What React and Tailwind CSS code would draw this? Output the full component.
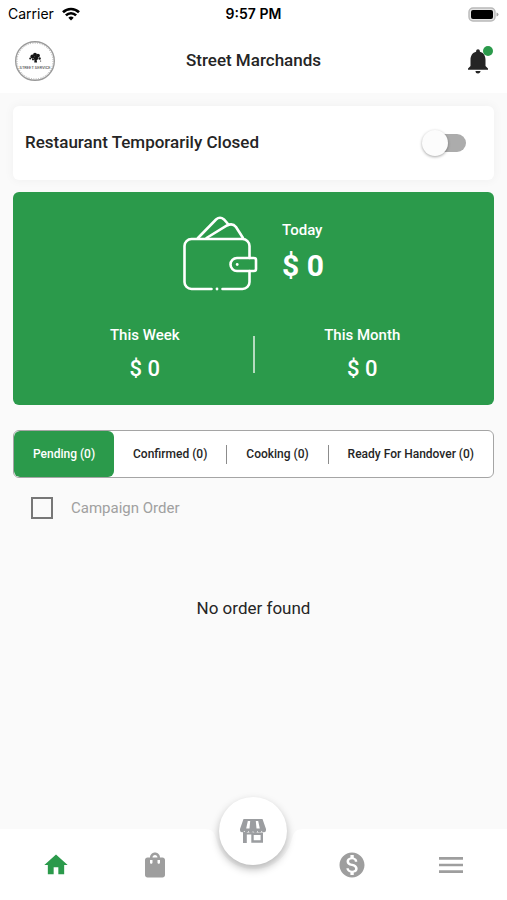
import React, { useState } from 'react'
import { MdHome, MdMenu, MdMonetizationOn, MdNotifications, MdShoppingBag } from 'react-icons/md'

const tabs = [
  { id: 'pending', label: 'Pending', count: 0 },
  { id: 'confirmed', label: 'Confirmed', count: 0 },
  { id: 'cooking', label: 'Cooking', count: 0 },
  { id: 'handover', label: 'Ready For Handover', count: 0 }
]

export default function App() {
  return (
    <div className="flex min-h-screen flex-col bg-[#fafafa] font-[Roboto,sans-serif] text-[#252525]">
      <header className="bg-white">
        <StatusBar />
        <div className="grid h-[65px] grid-cols-[1fr_auto_1fr] items-center px-[14px]">
          <Logo />
          <h1 className="text-[17px] font-medium">Street Marchands</h1>
          <button type="button" aria-label="Notifications" className="relative justify-self-end">
            <MdNotifications className="size-[30px]" />
            <span className="absolute top-0 right-0 size-[10px] rounded-full bg-[#2b9a4b]" />
          </button>
        </div>
      </header>

      <main className="flex-1 px-[13px] pt-[13px]">
        <RestaurantSwitch />
        <Earnings />
        <Orders />
      </main>

      <BottomNav />
    </div>
  )
}

function StatusBar() {
  return (
    <div className="grid h-7 grid-cols-3 items-center px-2 font-[Inter,sans-serif] text-sm text-black">
      <div className="flex items-center gap-2">
        <span>Carrier</span>
        <svg viewBox="0 0 18 14" className="h-[14px] w-[18px]" fill="none" stroke="currentColor" strokeWidth="2.6">
          <path d="M1 5.3a11.4 11.4 0 0 1 16 0" />
          <path d="M3.9 8.4a7.2 7.2 0 0 1 10.2 0" />
          <path d="M9 13.6 6.3 10.8a3.9 3.9 0 0 1 5.4 0z" fill="currentColor" stroke="none" />
        </svg>
      </div>
      <span className="text-center font-semibold">9:57 PM</span>
      <svg viewBox="0 0 31 15" className="h-[15px] w-[31px] justify-self-end">
        <rect x="1" y="1" width="26" height="13" rx="4" fill="#e4e4e4" stroke="#b9b9b9" strokeWidth="1.4" />
        <rect x="3" y="3" width="22" height="9" rx="2" fill="#000" />
        <path d="M28.5 5.5v4q2-.5 2-2t-2-2z" fill="#a5a5a5" />
      </svg>
    </div>
  )
}

function Logo() {
  return (
    <svg viewBox="0 0 42 42" className="size-[42px]" role="img" aria-label="Street Service">
      <circle cx="21" cy="21" r="19.3" fill="#fff" stroke="#9a9a9a" strokeWidth="1.4" />
      <circle cx="21" cy="21" r="18" fill="none" stroke="#a8a8a8" strokeWidth="1" strokeDasharray="1 1.4" />
      <g fill="#161616">
        <circle cx="18.4" cy="16.6" r="2" />
        <circle cx="21" cy="14.6" r="1.900" />
        <circle cx="24" cy="15.6" r="1.900" />
        <circle cx="22" cy="18" r="2.200" />
        <circle cx="16.200" cy="18.500" r="1" />
        <circle cx="19" cy="19.300" r="1.100" />
        <circle cx="25.600" cy="18.500" r="1.200" />
        <path d="M20.500 18h1.800l.8 4.500h-2.800z" />
        <circle cx="26.600" cy="21" r=".6" />
      </g>
      <text x="21" y="28.500" textAnchor="middle" fontSize="4" fontWeight="500" fill="#555" className="font-['Liberation_Sans_Narrow',Roboto,sans-serif]">
        STREET SERVICE
      </text>
    </svg>
  )
}

function RestaurantSwitch() {
  const [closed, setClosed] = useState(false)

  return (
    <label className="flex h-[74px] items-center justify-between rounded-md bg-white pr-7 pl-3 shadow-[0_0_8px_2px_rgba(0,0,0,0.03)]">
      <span className="text-[17px] font-medium">Restaurant Temporarily Closed</span>
      <input
        type="checkbox"
        role="switch"
        checked={closed}
        onChange={(e) => setClosed(e.target.checked)}
        className="relative h-[18px] w-10 appearance-none rounded-full bg-[#acacac] before:absolute before:-top-1 before:-left-1 before:size-[26px] before:rounded-full before:bg-[#fcfcfc] before:shadow-[0_1px_3px_rgba(0,0,0,0.35)] checked:bg-[#95cda5] checked:before:left-5"
      />
    </label>
  )
}

function Earnings() {
  return (
    <section className="mt-3 flex h-[213px] flex-col rounded-md bg-[#2b9a4b] pt-6 text-white">
      <div className="flex justify-center gap-6">
        <WalletIcon />
        <div className="pt-1">
          <p className="text-[15px] leading-5 font-medium">Today</p>
          <p className="mt-2 text-3xl font-bold">$ 0</p>
        </div>
      </div>
      <div className="mt-[34px] flex items-center px-6">
        <PeriodTotal label="This Week" value="$ 0" />
        <div className="h-[37px] w-[2px] bg-[#b5dcc0]" />
        <PeriodTotal label="This Month" value="$ 0" />
      </div>
    </section>
  )
}

function PeriodTotal({ label, value }) {
  return (
    <div className="flex-1 text-center">
      <p className="text-[15px] leading-5 font-medium">{label}</p>
      <p className="mt-[10px] text-[22px] leading-7 font-medium">{value}</p>
    </div>
  )
}

function WalletIcon() {
  return (
    <svg viewBox="0 0 75 75" className="size-[75px]" fill="none" stroke="#fff" strokeWidth="2.6" strokeLinecap="round">
      <path d="M28.5 73H8.5a7 7 0 0 1-7-7V30a7 7 0 0 1 7-7h51a7 7 0 0 1 7 7v12" />
      <path d="M66.5 55v11a7 7 0 0 1-7 7H39.5" />
      <path d="M54 42h17q2 0 2 2v9q0 2-2 2H54a6.5 6.5 0 0 1 0-13z" />
      <path d="M15 22 33 3.5q4-3.500 8 0l4.500 5" />
      <path d="M23.500 22 44 9.500q5.500-3 9 1.500l7 11" />
      <circle cx="54.200" cy="48.500" r="1.400" fill="#fff" stroke="none" />
      <circle cx="34" cy="73" r="1.400" fill="#fff" stroke="none" />
    </svg>
  )
}

function Orders() {
  const [active, setActive] = useState('pending')

  return (
    <section className="pt-[25px]">
      <div role="tablist" className="flex h-12 overflow-hidden rounded-md border border-[#a5a5a5] bg-white">
        {tabs.map((tab, index) => {
          const selected = tab.id === active
          const divider = index > 0 && index < tabs.length - 1
          return (
            <button
              key={tab.id}
              type="button"
              role="tab"
              aria-selected={selected}
              onClick={() => setActive(tab.id)}
              className={`flex flex-auto items-center text-[12px] font-medium whitespace-nowrap ${
                selected ? 'rounded-md bg-[#2b9a4b] text-white' : ''
              }`}
            >
              <span className="flex-1 px-[18px]">{`${tab.label} (${tab.count})`}</span>
              {divider && <span className="h-[19px] w-px bg-[#8c8c8c]" />}
            </button>
          )
        })}
      </div>

      <label className="mt-[19px] ml-[18px] flex w-fit items-center gap-[18px] text-[15px] leading-[22px] text-[#a0a0a0]">
        <input type="checkbox" className="size-[22px] appearance-none border-2 border-[#777777] checked:bg-[#2b9a4b]" />
        Campaign Order
      </label>

      <p className="py-[77px] text-center text-[17px]">No order found</p>
    </section>
  )
}

function BottomNav() {
  return (
    <nav className="relative grid h-[71px] grid-cols-5 items-center justify-items-center bg-white px-[7px] text-[#9e9e9e]">
      <svg viewBox="0 0 100 42" className="absolute top-0 left-1/2 h-[42px] w-[100px] -translate-x-1/2">
        <path d="M0 0C8 0 10 3 12 9C16 28 31 40 50 40S84 28 88 9C90 3 92 0 100 0z" fill="#fafafa" />
      </svg>
      <a href="#home" aria-label="Home" className="text-[#2b9a4b]">
        <MdHome className="size-7" />
      </a>
      <a href="#orders" aria-label="Orders">
        <MdShoppingBag className="size-[30px]" />
      </a>
      <a
        href="#restaurant"
        aria-label="Restaurant"
        className="relative flex size-[68px] -translate-y-1/2 items-center justify-center rounded-full bg-white shadow-[0_4px_8px_rgba(0,0,0,0.28)]"
      >
        <StoreIcon />
      </a>
      <a href="#wallet" aria-label="Wallet">
        <MdMonetizationOn className="size-[30px]" />
      </a>
      <a href="#menu" aria-label="Menu">
        <MdMenu className="size-8" />
      </a>
    </nav>
  )
}

function StoreIcon() {
  return (
    <svg viewBox="0 0 26 24" className="h-6 w-[26px]">
      <path
        d="M3.500 0h19L26 10v1.200a2.200 2.200 0 0 1-4.300.6 2.200 2.200 0 0 1-4.300 0 2.200 2.200 0 0 1-4.400 0 2.200 2.200 0 0 1-4.400 0 2.200 2.200 0 0 1-4.300 0A2.200 2.200 0 0 1 0 11.200V10z"
        fill="#9b9da0"
      />
      <path d="M7.800 2h2.400L9.500 9.500H6.200zM15.800 2h2.400l1.600 7.500h-3.300z" fill="#fff" />
      <path d="M3 13h3.800v11H3zM6 13.500h7v2H6z" fill="#9b9da0" />
      <path d="M12.500 14.800h9.300v7.700h-9.300z" fill="#fff" stroke="#9b9da0" strokeWidth="2.400" />
    </svg>
  )
}
